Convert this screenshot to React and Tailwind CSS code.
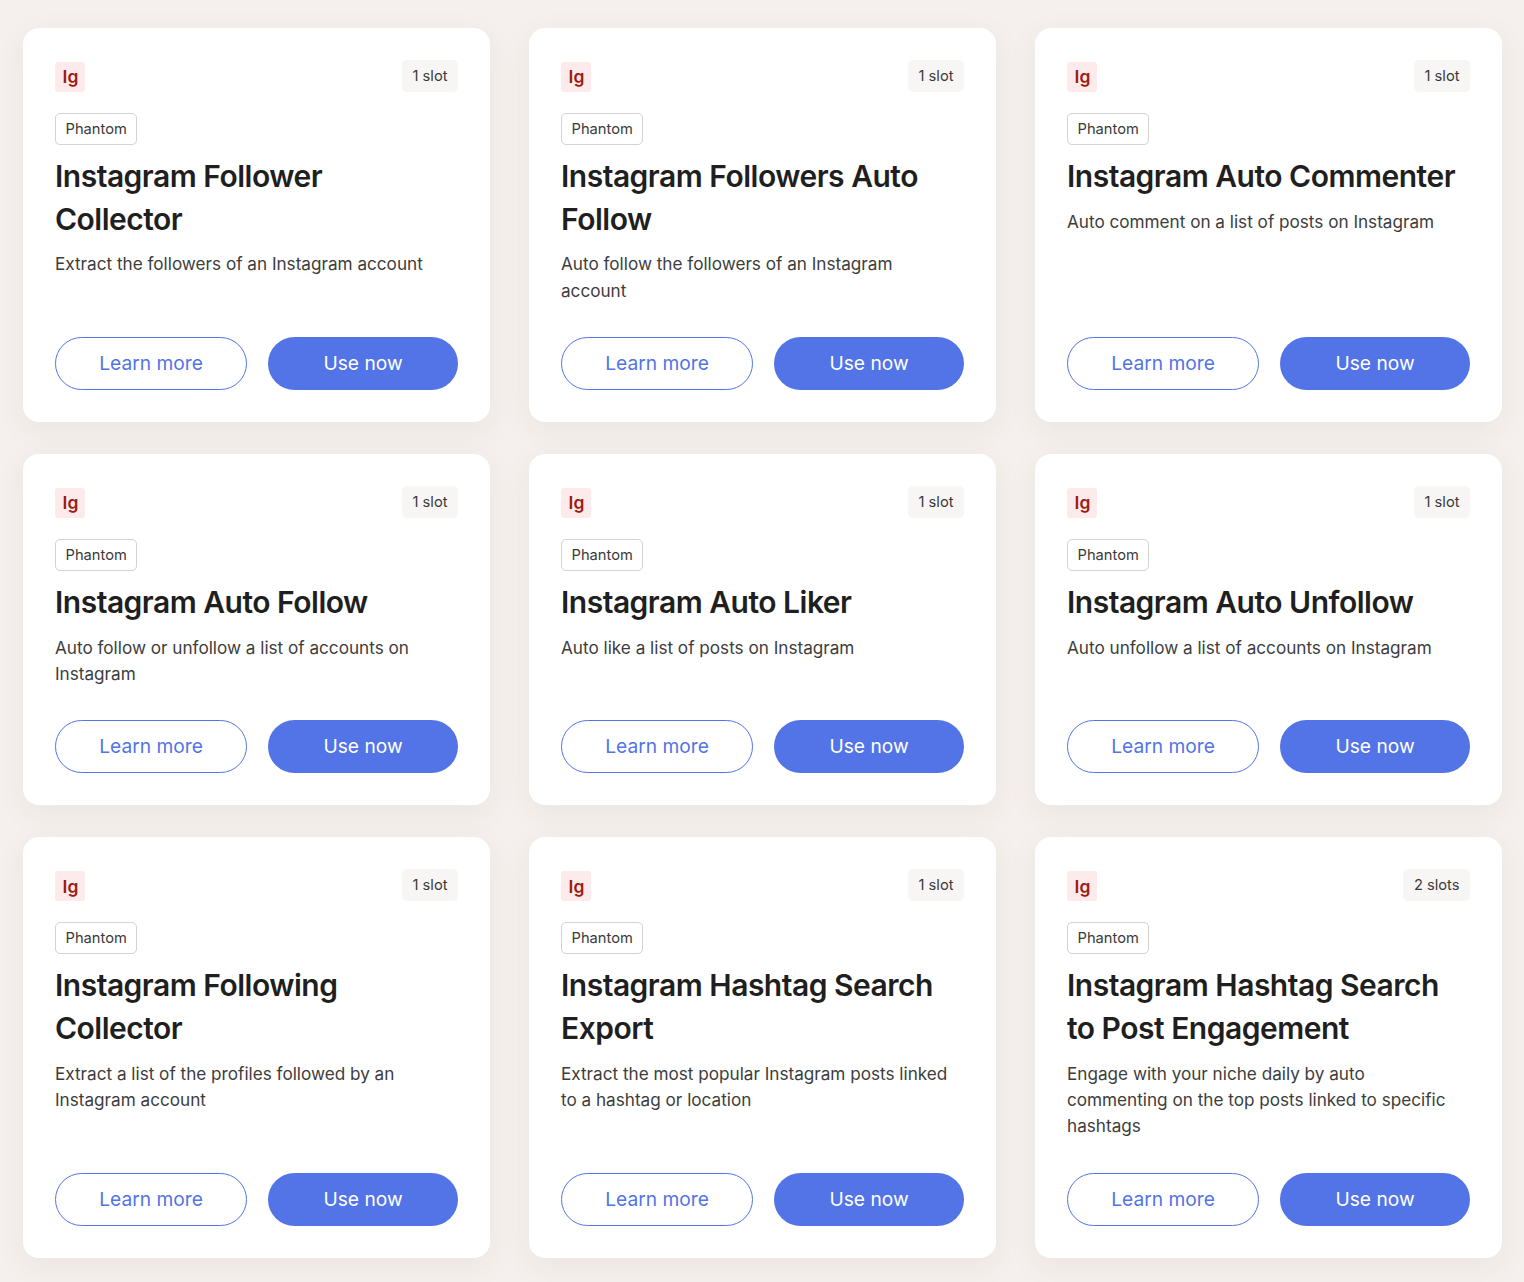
const cards = [
  { title: "Instagram Follower Collector", desc: "Extract the followers of an Instagram account", slot: "1 slot" },
  { title: "Instagram Followers Auto Follow", desc: "Auto follow the followers of an Instagram account", slot: "1 slot" },
  { title: "Instagram Auto Commenter", desc: "Auto comment on a list of posts on Instagram", slot: "1 slot" },
  { title: "Instagram Auto Follow", desc: "Auto follow or unfollow a list of accounts on Instagram", slot: "1 slot" },
  { title: "Instagram Auto Liker", desc: "Auto like a list of posts on Instagram", slot: "1 slot" },
  { title: "Instagram Auto Unfollow", desc: "Auto unfollow a list of accounts on Instagram", slot: "1 slot" },
  { title: "Instagram Following Collector", desc: "Extract a list of the profiles followed by an Instagram account", slot: "1 slot" },
  { title: "Instagram Hashtag Search Export", desc: "Extract the most popular Instagram posts linked to a hashtag or location", slot: "1 slot" },
  { title: "Instagram Hashtag Search to Post Engagement", desc: "Engage with your niche daily by auto commenting on the top posts linked to specific hashtags", slot: "2 slots" },
];

function Card({ title, desc, slot }) {
  return (
    <div className="flex flex-col rounded-[16px] bg-white p-8 shadow-[0_8px_32px_rgba(80,50,30,0.06)]">
      <div className="flex items-start justify-between">
        <div className="mt-[2px] flex h-[30px] w-[30px] items-center justify-center rounded-[3px] bg-[#fdeaea] pt-[1px] pl-[1px] text-[17.5px] font-semibold text-[#9c1c14]">Ig</div>
        <div className="flex h-8 items-center rounded-[5px] bg-[#f7f6f5] px-[10.5px] text-[14.7px] text-[#3a3a3a]">{slot}</div>
      </div>
      <div className="mt-[21.1px] flex h-8 w-fit items-center rounded-[5px] border border-[#d5d2d0] px-[9.5px] text-[14.7px] text-[#3a3a3a]">Phantom</div>
      <h3 className="mt-[10px] pr-[6px] text-[30px] leading-[42.6px] font-semibold tracking-[-0.5px] text-[#1f1f1f]">{title}</h3>
      <p className="mt-[11px] pr-[6px] text-[17.15px] leading-[26.4px] text-[#3d3d3d]">{desc}</p>
      <div className="mt-auto flex justify-between pt-[32.9px]">
        <button className="h-[53px] w-[192px] rounded-full border border-[#5274e6] bg-white text-[19.2px] text-[#5274e6]">Learn more</button>
        <button className="h-[53px] w-[190px] rounded-full bg-[#5274e6] text-[19.2px] text-white">Use now</button>
      </div>
    </div>
  );
}

export default function App() {
  return (
    <div className="min-h-[1282px] bg-[#f5f0ed] pt-[28px] pr-[22px] pb-[24px] pl-[23px] font-['Inter',sans-serif]">
      <div className="grid grid-cols-[467px_467px_467px] gap-x-[39px] gap-y-[32px]">
        {cards.map((c) => (
          <Card key={c.title} {...c} />
        ))}
      </div>
    </div>
  );
}
